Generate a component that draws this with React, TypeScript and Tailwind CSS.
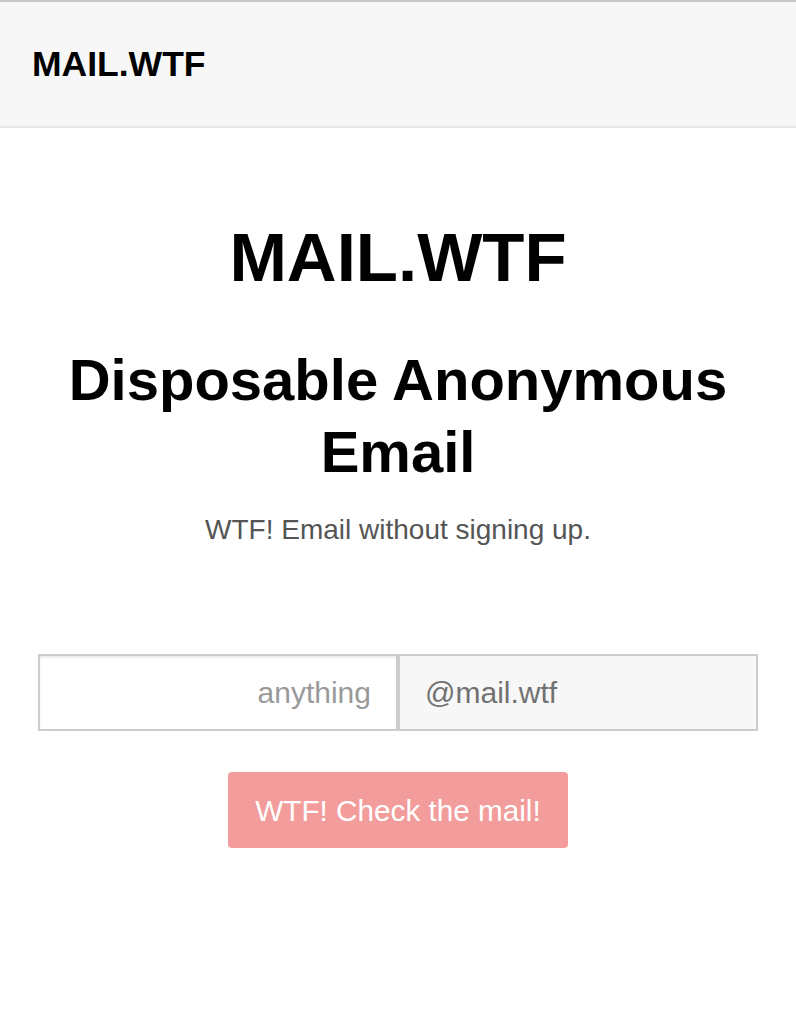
import React from "react";

export default function App() {
  return (
    <div className="min-h-[1036px] bg-white font-['Liberation_Sans',Arial,sans-serif]">
      <header className="h-[128px] border-t-2 border-b-2 border-t-[#c9c9c9] border-b-[#e7e7e7] bg-[#f7f7f7] flex items-center px-[32px]">
        <span className="text-[35.5px] leading-[40px] font-bold text-black">MAIL.WTF</span>
      </header>
      <main className="px-[38px] flex flex-col items-center text-center">
        <h1 className="mt-[92px] text-[69px] leading-[76px] font-bold text-black">MAIL.WTF</h1>
        <h2 className="mt-[48px] text-[58px] leading-[72px] font-bold text-black">
          Disposable Anonymous Email
        </h2>
        <p className="mt-[22px] text-[28px] leading-[40px] text-[#555]">WTF! Email without signing up.</p>
        <div className="mt-[104px] w-full flex h-[77px]">
          <input
            type="text"
            placeholder="anything"
            className="w-[360px] h-full border-2 border-[#ccc] bg-white pr-[25px] pl-[12px] text-right text-[30px] text-[#555] placeholder:text-[#999] outline-none shadow-[inset_0_2px_2px_rgba(0,0,0,0.075)] font-['Liberation_Sans',Arial,sans-serif]"
          />
          <div className="flex-1 h-full border-2 border-[#ccc] bg-[#f7f7f7] flex items-center pl-[25px] text-[30px] text-[#717171]">
            @mail.wtf
          </div>
        </div>
        <button
          type="button"
          className="mt-[41px] w-[340px] h-[76px] rounded-[4px] bg-[#f29d9c] text-white text-[29.7px] flex items-center justify-center pt-[2px] font-['Liberation_Sans',Arial,sans-serif]"
        >
          WTF! Check the mail!
        </button>
      </main>
    </div>
  );
}
